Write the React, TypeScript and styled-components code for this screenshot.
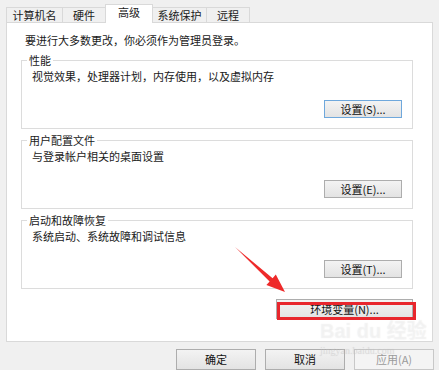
import React from "react";
import styled, { createGlobalStyle, css } from "styled-components";

const GlobalStyle = createGlobalStyle`
  html, body {
    margin: 0;
    padding: 0;
    background: #f0f0f0;
  }
  body {
    font-family: "Microsoft YaHei", "Noto Sans CJK SC", "Noto Sans", sans-serif;
    font-size: 11px;
    color: #1a1a1a;
  }
`;

const Window = styled.div`
  position: relative;
  width: 439px;
  height: 370px;
  overflow: hidden;
  background: #f0f0f0;
  display: flex;
  flex-direction: column;
`;

const TabStrip = styled.div`
  display: flex;
  align-items: flex-end;
  height: 22px;
  padding-left: 6px;
  position: relative;
  z-index: 2;
`;

const Tab = styled.div<{ $w: number; $active?: boolean }>`
  width: ${({ $w }) => $w}px;
  height: 15px;
  box-sizing: border-box;
  display: flex;
  align-items: center;
  justify-content: center;
  border: 1px solid #d9d9d9;
  border-bottom: none;
  margin-right: -1px;
  background: #f0f0f0;
  line-height: 13px;
  ${({ $active }) =>
    $active &&
    css`
      height: 19px;
      margin-bottom: -1px;
      background: #fff;
      position: relative;
      z-index: 1;
      padding-bottom: 3px;
    `}
`;

const Panel = styled.div`
  margin: 0 6px;
  height: 320px;
  box-sizing: border-box;
  background: #fff;
  border: 1px solid #d9d9d9;
  padding: 10px 19px 0 14px;
  display: flex;
  flex-direction: column;
`;

const Intro = styled.div`
  line-height: 14px;
  padding-left: 4px;
  margin-bottom: 13px;
`;

const Groups = styled.div`
  display: flex;
  flex-direction: column;
  gap: 11px;
`;

const Group = styled.div`
  position: relative;
  height: 69px;
  box-sizing: border-box;
  border: 1px solid #dcdcdc;
  padding: 8px 10px 0 10px;
`;

const Legend = styled.span`
  position: absolute;
  top: -8px;
  left: 5px;
  padding: 0 2px;
  background: #fff;
  line-height: 14px;
`;

const Desc = styled.div`
  line-height: 14px;
`;

const ButtonRow = styled.div<{ $top: number }>`
  display: flex;
  justify-content: flex-end;
  margin-top: ${({ $top }) => $top}px;
`;

const WinButton = styled.div<{ $w: number; $h?: number; $focus?: boolean; $disabled?: boolean }>`
  width: ${({ $w }) => $w}px;
  height: ${({ $h }) => $h ?? 19}px;
  box-sizing: border-box;
  display: flex;
  align-items: center;
  justify-content: center;
  border: 1px solid ${({ $focus }) => ($focus ? "#6fa8dc" : "#adadad")};
  background: linear-gradient(#f3f3f3, #e3e3e3);
  color: #111;
  font-size: 11px;
  line-height: 13px;
  ${({ $disabled }) =>
    $disabled &&
    css`
      border-color: #c8c8c8;
      background: #f4f4f4;
      color: #9a9a9a;
    `}
`;

const EnvRow = styled.div`
  display: flex;
  justify-content: flex-end;
  margin-top: 10px;
`;

const Footer = styled.div`
  display: flex;
  justify-content: flex-end;
  gap: 9px;
  padding-right: 5px;
  margin-top: 7px;
`;

const Highlight = styled.div`
  position: absolute;
  left: 277px;
  top: 302px;
  width: 139px;
  height: 18px;
  box-sizing: border-box;
  border: 3px solid #e8262d;
  pointer-events: none;
`;

const Arrow = styled.svg`
  position: absolute;
  left: 0;
  top: 0;
  pointer-events: none;
`;

const Watermark = styled.div`
  position: absolute;
  left: 320px;
  top: 320px;
  display: flex;
  flex-direction: column;
  align-items: flex-start;
  color: rgba(255, 255, 255, 0.4);
  text-shadow: 0 0 1px rgba(170, 170, 170, 0.25);
  pointer-events: none;
`;

const MarkTitle = styled.div`
  font-family: "Liberation Sans", "Noto Sans CJK SC", sans-serif;
  font-size: 20px;
  font-weight: bold;
  line-height: 22px;
`;

const MarkUrl = styled.div`
  font-family: "Liberation Serif", serif;
  font-size: 10px;
  line-height: 12px;
  margin-top: 3px;
  color: rgba(200, 200, 200, 0.35);
`;

const tabs = [
  { label: "计算机名", w: 57 },
  { label: "硬件", w: 44 },
  { label: "高级", w: 48, active: true },
  { label: "系统保护", w: 55 },
  { label: "远程", w: 44 },
];

const groups = [
  { title: "性能", desc: "视觉效果，处理器计划，内存使用，以及虚拟内存", btn: "设置(S)...", focus: true },
  { title: "用户配置文件", desc: "与登录帐户相关的桌面设置", btn: "设置(E)..." },
  { title: "启动和故障恢复", desc: "系统启动、系统故障和调试信息", btn: "设置(T)..." },
];

export default function App() {
  return (
    <>
      <GlobalStyle />
      <Window>
        <TabStrip>
          {tabs.map((t) => (
            <Tab key={t.label} $w={t.w} $active={t.active}>
              {t.label}
            </Tab>
          ))}
        </TabStrip>
        <Panel>
          <Intro>要进行大多数更改，你必须作为管理员登录。</Intro>
          <Groups>
            {groups.map((g) => (
              <Group key={g.title}>
                <Legend>{g.title}</Legend>
                <Desc>{g.desc}</Desc>
                <ButtonRow $top={17}>
                  <WinButton $w={78} $h={18} $focus={g.focus}>
                    {g.btn}
                  </WinButton>
                </ButtonRow>
              </Group>
            ))}
          </Groups>
          <EnvRow>
            <WinButton $w={137} $h={20}>
              环境变量(N)...
            </WinButton>
          </EnvRow>
        </Panel>
        <Footer>
          <WinButton $w={80} $h={21}>确定</WinButton>
          <WinButton $w={80} $h={21}>取消</WinButton>
          <WinButton $w={80} $h={21} $disabled>应用(A)</WinButton>
        </Footer>

        <Arrow width="439" height="370" viewBox="0 0 439 370">
          <polygon
            points="235,247 272.6,278.2 275.8,274.6 285,292 266.4,285 269.6,281.4"
            fill="#ee2a2a"
          />
        </Arrow>
        <Highlight />
        <Watermark>
          <MarkTitle>Bai du 经验</MarkTitle>
          <MarkUrl>jingyan.baidu.com</MarkUrl>
        </Watermark>
      </Window>
    </>
  );
}
